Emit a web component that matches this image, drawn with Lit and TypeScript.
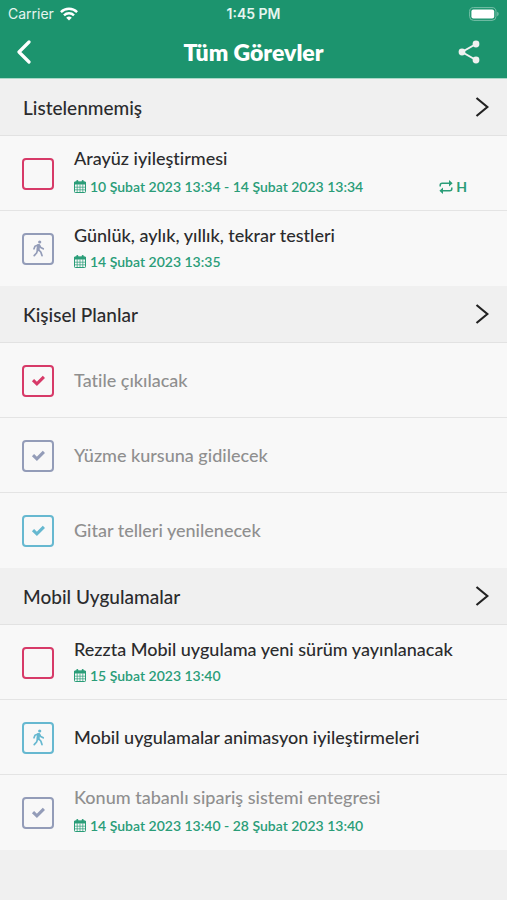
import { LitElement, html, css, svg, nothing } from "lit";
import { customElement, property } from "lit/decorators.js";

type Status = "open" | "progress" | "done";
type Tone = "high" | "normal" | "low";

interface Task {
  title: string;
  status: Status;
  tone: Tone;
  date?: string;
  until?: string;
  repeat?: string;
}

interface Group {
  name: string;
  tasks: Task[];
}

const GROUPS: Group[] = [
  {
    name: "Listelenmemiş",
    tasks: [
      { title: "Arayüz iyileştirmesi", status: "open", tone: "high", date: "10 Şubat 2023 13:34", until: "14 Şubat 2023 13:34", repeat: "H" },
      { title: "Günlük, aylık, yıllık, tekrar testleri", status: "progress", tone: "normal", date: "14 Şubat 2023 13:35" },
    ],
  },
  {
    name: "Kişisel Planlar",
    tasks: [
      { title: "Tatile çıkılacak", status: "done", tone: "high" },
      { title: "Yüzme kursuna gidilecek", status: "done", tone: "normal" },
      { title: "Gitar telleri yenilenecek", status: "done", tone: "low" },
    ],
  },
  {
    name: "Mobil Uygulamalar",
    tasks: [
      { title: "Rezzta Mobil uygulama yeni sürüm yayınlanacak", status: "open", tone: "high", date: "15 Şubat 2023 13:40" },
      { title: "Mobil uygulamalar animasyon iyileştirmeleri", status: "progress", tone: "low" },
      { title: "Konum tabanlı sipariş sistemi entegresi", status: "done", tone: "normal", date: "14 Şubat 2023 13:40", until: "28 Şubat 2023 13:40" },
    ],
  },
];

const checkIcon = svg`<svg class="mark" width="15" height="15" viewBox="0 0 15 15" aria-hidden="true">
  <path d="M2 7.2 5.9 10.9 12.9 3.9" fill="none" stroke="currentColor" stroke-width="3.1"/></svg>`;

const walkIcon = svg`<svg class="mark" width="13" height="17" viewBox="0 0 13 17" fill="none" stroke="currentColor" aria-hidden="true">
  <circle cx="7.7" cy="2" r="1.6" fill="currentColor" stroke="none"/>
  <path d="M6.6 5.6 6 9.6" stroke-width="3.2" stroke-linecap="round"/>
  <path d="M6 5 3 6.2 2 8.8M7.4 5.2 8.8 7.6 11.2 8.8M5.6 10 4.6 13 2.2 15.6M6.4 9.6 8.8 12 10 15.6" stroke-width="1.7" stroke-linecap="round" stroke-linejoin="round"/></svg>`;

const calendarIcon = svg`<svg width="12" height="13" viewBox="0 0 12 13" fill="none" stroke="currentColor" aria-hidden="true">
  <rect x=".5" y="2" width="11" height="10.5" rx=".8"/>
  <path d="M.5 2.2h11v1.8H.5z" fill="currentColor"/>
  <path d="M3.3 1v2.2M8.7 1v2.2" stroke-width="2" stroke-linecap="round"/>
  <path d="M3.2 4.5v8M6 4.5v8M8.8 4.5v8M.5 7.2h11M.5 9.8h11" stroke-width=".7"/></svg>`;

const repeatIcon = svg`<svg width="14" height="16" viewBox="0 0 14 16" fill="none" stroke="currentColor" stroke-width="1.5" aria-hidden="true">
  <path d="M1.2 7.6V6.2Q1.2 4.2 3.2 4.2H11M12.8 8.4V9.8Q12.8 11.8 10.8 11.8H3"/>
  <path d="M10 1 13.6 4.2 10 7.4zM4 8.6.4 11.8 4 15z" fill="currentColor" stroke="none"/></svg>`;

@customElement("task-row")
export class TaskRow extends LitElement {
  @property({ attribute: false }) task!: Task;

  static styles = css`
    :host { display: block; }
    .row {
      display: flex;
      align-items: center;
      gap: 20px;
      box-sizing: border-box;
      min-height: 75px;
      padding: 0 40px 0 22px;
    }
    .state { display: grid; place-items: center; flex: none; }
    .state > * { grid-area: 1 / 1; }
    .box {
      appearance: none;
      box-sizing: border-box;
      width: 32px;
      height: 32px;
      margin: 0;
      border: 2px solid currentColor;
      border-radius: 4px;
      color: inherit;
      cursor: pointer;
    }
    .mark { pointer-events: none; }
    .high { color: #d73a68; }
    .normal { color: #939cb8; }
    .low { color: #66b8d0; }
    .body {
      display: flex;
      flex-direction: column;
      gap: 3px;
      flex: 1;
      min-width: 0;
      padding-bottom: 1px;
    }
    .title { font-size: 18px; line-height: 24px; font-weight: 500; color: #2b2b2d; }
    .done .title { color: #8f8f8f; }
    .meta {
      display: flex;
      align-items: center;
      gap: 4px;
      min-height: 24px;
      font-size: 14px;
      line-height: 24px;
      font-weight: 600;
      color: #2a9d78;
    }
    .ranged { min-height: 28px; }
    .repeat {
      display: flex;
      align-items: center;
      gap: 3px;
      margin-left: auto;
      font-weight: 700;
    }
  `;

  render() {
    const t = this.task;
    return html`
      <div class="row ${t.status}">
        <span class="state ${t.tone}">
          <input id="state" class="box" type="checkbox" .checked=${t.status === "done"} .indeterminate=${t.status === "progress"} />
          ${t.status === "done" ? checkIcon : t.status === "progress" ? walkIcon : nothing}
        </span>
        <div class="body">
          <label class="title" for="state">${t.title}</label>
          ${t.date
            ? html`<div class="meta ${t.until ? "ranged" : ""}">
                ${calendarIcon}<span>${t.until ? `${t.date} - ${t.until}` : t.date}</span>
                ${t.repeat ? html`<span class="repeat">${repeatIcon}<span>${t.repeat}</span></span>` : nothing}
              </div>`
            : nothing}
        </div>
      </div>
    `;
  }
}

@customElement("app-root")
export class AppRoot extends LitElement {
  static styles = css`
    :host {
      display: block;
      min-height: 100vh;
      background: #f0f0f0;
      font-family: Lato, "Noto Sans", sans-serif;
      font-variant-ligatures: none;
    }
    header { background: #1c946e; color: #fff; }
    .status {
      display: grid;
      grid-template-columns: 1fr auto 1fr;
      align-items: center;
      height: 27px;
      padding: 0 8px;
      font: 400 14px/27px Inter, sans-serif;
      color: #e6f5ef;
    }
    .carrier { display: flex; align-items: center; gap: 6px; }
    .clock { font-weight: 600; }
    .battery { justify-self: end; }
    .nav {
      display: grid;
      grid-template-columns: 54px 1fr 54px;
      align-items: center;
      height: 52px;
      box-sizing: border-box;
      padding: 0 4px 1px;
      border-bottom: 1px solid #a9d8c7;
    }
    button {
      display: grid;
      place-items: center;
      width: 40px;
      height: 40px;
      padding: 0;
      border: 0;
      background: none;
      color: inherit;
      font: inherit;
      cursor: pointer;
    }
    h1 { margin: 0; text-align: center; font-size: 23px; line-height: 32px; font-weight: 800; }
    h2 { margin: 0; border-bottom: 1px solid #e2e2e2; }
    .group {
      display: flex;
      justify-content: space-between;
      align-items: center;
      width: 100%;
      height: 56px;
      padding: 0 18px 0 23px;
      font-size: 19px;
      font-weight: 500;
      color: #2b2b2d;
    }
    ul { margin: 0; padding: 0; list-style: none; background: #f8f8f8; }
    li { box-sizing: border-box; height: 75px; border-bottom: 1px solid #e4e4e4; }
    li:last-child { border-bottom: 0; }
  `;

  render() {
    return html`
      <header>
        <div class="status">
          <span class="carrier">Carrier
            <svg width="18" height="14" viewBox="0 0 18 14" fill="none" stroke="#fff" stroke-width="2.4" aria-hidden="true">
              <path d="M.9 5.1a11.4 11.4 0 0 1 16.2 0M4 8.4a7 7 0 0 1 10 0"/>
              <path d="M9 13.6 6.2 10.8a4 4 0 0 1 5.6 0z" fill="#fff" stroke="none"/>
            </svg>
          </span>
          <span class="clock">1:45 PM</span>
          <svg class="battery" width="30" height="14" viewBox="0 0 30 14" aria-hidden="true">
            <rect x=".6" y=".6" width="26.4" height="12.8" rx="4" fill="none" stroke="#77bfa8"/>
            <rect x="2.4" y="2.4" width="22.8" height="9.2" rx="2" fill="#fff"/>
            <path d="M28.2 4.8q1.5.6 1.5 2.2t-1.5 2.2z" fill="#77bfa8"/>
          </svg>
        </div>
        <div class="nav">
          <button aria-label="Geri">
            <svg width="16" height="24" viewBox="0 0 16 24" fill="none" stroke="#fff" stroke-width="3.2" aria-hidden="true">
              <path d="M13 2 3 12 13 22" stroke-linecap="round" stroke-linejoin="round"/>
            </svg>
          </button>
          <h1>Tüm Görevler</h1>
          <button aria-label="Paylaş">
            <svg width="22" height="24" viewBox="0 0 22 24" fill="#f0f0f0" aria-hidden="true">
              <path d="M18 4 4 12 18 20" fill="none" stroke="#f0f0f0" stroke-width="2"/>
              <circle cx="18" cy="4" r="3.4"/><circle cx="4" cy="12" r="3.4"/><circle cx="18" cy="20" r="3.4"/>
            </svg>
          </button>
        </div>
      </header>
      <main>
        ${GROUPS.map(
          (g) => html`
            <section>
              <h2>
                <button class="group">
                  ${g.name}
                  <svg width="14" height="20" viewBox="0 0 14 20" fill="none" stroke="#222" stroke-width="2.2" aria-hidden="true">
                    <path d="M1.5 1 12.4 10 1.5 19"/>
                  </svg>
                </button>
              </h2>
              <ul>${g.tasks.map((t) => html`<li><task-row .task=${t}></task-row></li>`)}</ul>
            </section>
          `
        )}
      </main>
    `;
  }
}
